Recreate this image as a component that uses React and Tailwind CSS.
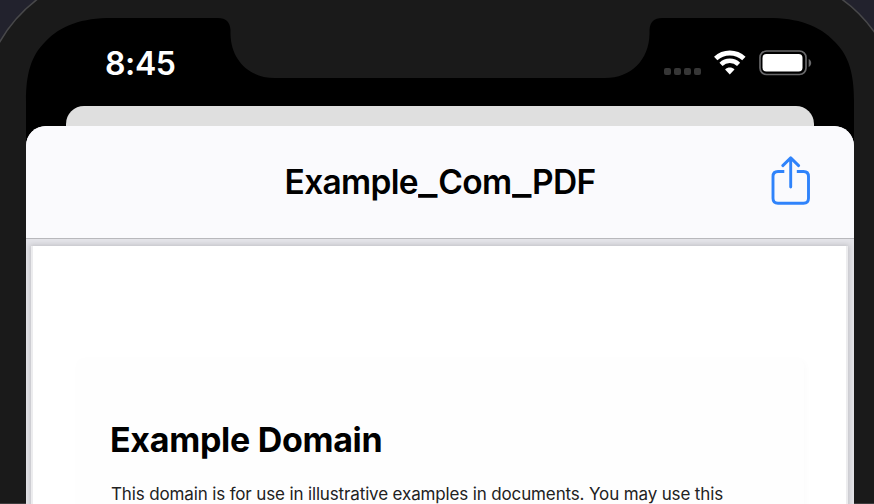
function DeviceFrame() {
  return (
    <svg className="absolute inset-0" width="874" height="504" viewBox="0 0 874 504" fill="none" aria-hidden="true">
      <rect width="874" height="504" fill="#22222d" />
      <path d="M-4 504V49C6 29 20 12 39 -2H840C855 8 867 21 878 37V504Z" fill="#1a1a1a" stroke="#48484a" strokeWidth="1.5" />
      <path
        d="M26 504V101C26 74 31 56 45 42C61 25 82 18 112 18H218C226 18 230 22 230.500 30V34C231 60 249 78 275 78H605C631 78 649 60 649.500 34V30C650 22 654 18 662 18H768C798 18 819 25 835 42C849 56 854 74 854 101V504Z"
        fill="#000"
      />
    </svg>
  );
}

function WifiIcon() {
  return (
    <svg width="32" height="25" viewBox="0 0 32 25" fill="none" aria-hidden="true">
      <path d="M1.700 8.500C9.600 1.100 22 1.100 29.900 8.500" stroke="#fff" strokeWidth="4.900" />
      <path d="M7 14.300C11.900 9.700 19.700 9.700 24.600 14.300" stroke="#fff" strokeWidth="4.500" />
      <path d="M11.100 19.400C13.800 17 17.800 17 20.500 19.400L15.800 24.500Z" fill="#fff" />
    </svg>
  );
}

function BatteryIcon() {
  return (
    <svg width="53" height="26" viewBox="0 0 53 26" fill="none" aria-hidden="true">
      <rect x="1" y="1" width="46" height="23.500" rx="6.500" stroke="#68686a" strokeWidth="1.700" />
      <rect x="3.500" y="3.900" width="40" height="17.700" rx="4" fill="#fff" />
      <path d="M49.700 9C53 10.500 53 15.500 49.700 17Z" fill="#68686a" />
    </svg>
  );
}

function ShareIcon() {
  return (
    <svg width="40" height="50" viewBox="0 0 40 50" fill="none" stroke="#2f83fb" strokeWidth="2.900" aria-hidden="true">
      <path d="M13.300 15.500H7C3.500 15.500 2 17 2 20.500V42.200C2 45.700 3.500 47.200 7 47.200H32.500C36 47.200 37.500 45.700 37.500 42.200V20.500C37.500 17 36 15.500 32.500 15.500H25.800" />
      <path d="M19.700 31V2.800M11.800 9.600L19.700 1.900L27.600 9.600" strokeLinecap="round" strokeLinejoin="round" />
    </svg>
  );
}

function StatusBar() {
  return (
    <div className="flex h-[88px] items-start justify-between pr-[42px] pl-[79px] text-white">
      <span className="mt-[26px] text-[32px] leading-10 font-[560] tracking-[-0.4px]">8:45</span>
      <div className="mt-8 flex items-start">
        <div className="mt-[18px] mr-[13px] flex gap-[3px]">
          <i className="size-[7px] rounded-[2px] bg-[#363636]" />
          <i className="size-[7px] rounded-[2px] bg-[#363636]" />
          <i className="size-[7px] rounded-[2px] bg-[#363636]" />
          <i className="size-[7px] rounded-[2px] bg-[#363636]" />
        </div>
        <WifiIcon />
        <div className="ml-[13px]">
          <BatteryIcon />
        </div>
      </div>
    </div>
  );
}

function Underscore() {
  return <span className="inline-block w-[20.500px] origin-left scale-x-[1.22] font-bold">_</span>;
}

export default function App() {
  return (
    <div className="relative h-[504px] w-[874px] overflow-hidden font-['Inter',sans-serif]">
      <DeviceFrame />
      <div className="relative flex h-full flex-col pt-[18px] pr-5 pl-[26px]">
        <StatusBar />
        <div className="mx-10 h-5 shrink-0 rounded-t-[18px] bg-[#dfdfdf]" />
        <main className="flex min-h-0 flex-1 flex-col overflow-hidden rounded-t-[20px] bg-[#e3e3e8]">
          <header className="grid h-[113px] shrink-0 grid-cols-[1fr_auto_1fr] items-center border-b border-[#b8b8bc] bg-[#fafafd] px-[43px]">
            <span />
            <h1 className="text-[33.500px] leading-10 font-semibold tracking-[-0.7px] whitespace-nowrap text-black">
              Example
              <Underscore />
              Com
              <Underscore />
              PDF
            </h1>
            <button className="mb-0.5 justify-self-end" aria-label="Share">
              <ShareIcon />
            </button>
          </header>
          <article className="mt-[7px] mr-1.5 ml-[5px] flex-1 border-x-2 border-[#ececee] bg-white pr-[42px] pl-[43px] pt-[112px] shadow-[0_0_5px_1px_rgba(0,0,0,0.16)]">
            <section className="h-[300px] rounded-lg bg-[#fefefe] pt-[62px] pl-[34px] whitespace-nowrap shadow-[2px_2px_7px_rgba(0,0,0,0.02)]">
              <h2 className="text-[34px] leading-10 font-bold tracking-[-0.3px] text-black">Example Domain</h2>
              <p className="mt-[22px] pl-px text-[17px] leading-6 tracking-[-0.14px] text-[#222]">
                This domain is for use in illustrative examples in documents. You may use this
              </p>
            </section>
          </article>
        </main>
      </div>
    </div>
  );
}
